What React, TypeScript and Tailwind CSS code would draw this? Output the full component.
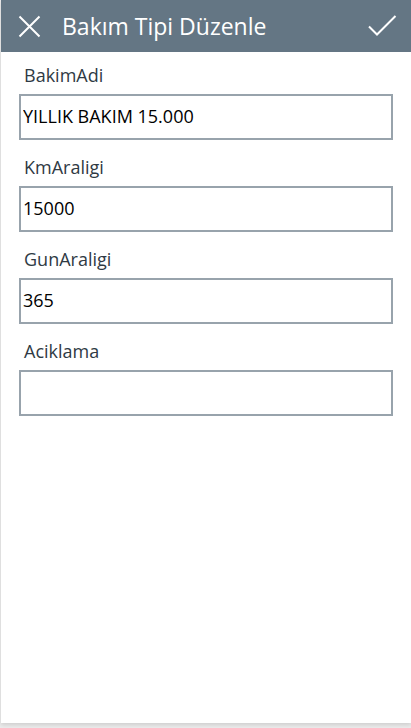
import React from "react";

const fields = [
  { label: "BakimAdi", value: "YILLIK BAKIM 15.000" },
  { label: "KmAraligi", value: "15000" },
  { label: "GunAraligi", value: "365" },
  { label: "Aciklama", value: "" },
];

export default function App() {
  return (
    <div className="w-[411px] h-[728px] bg-[#ebebeb] pl-[1px] font-['Open_Sans',sans-serif]">
      <div className="w-[410px] h-[723px] bg-white shadow-[0_2px_4px_rgba(0,0,0,0.12)] flex flex-col">
        {/* Header */}
        <div className="h-[52px] bg-[#647684] flex items-center text-white">
          <button className="ml-[17px] w-[23px] h-[23px] flex items-center justify-center">
            <svg width="23" height="23" viewBox="0 0 23 23" fill="none" stroke="white" strokeWidth="2">
              <path d="M1.5 1.5 L21.5 21.5 M21.5 1.5 L1.5 21.5" />
            </svg>
          </button>
          <h1 className="ml-[21px] text-[23px] leading-none">Bakım Tipi Düzenle</h1>
          <button className="ml-auto mr-[14px] w-[29px] h-[22px]">
            <svg width="29" height="22" viewBox="0 0 29 22" fill="none" stroke="white" strokeWidth="2">
              <path d="M1 11.5 L9 19.5 L27.5 1" />
            </svg>
          </button>
        </div>

        {/* Form */}
        <div className="pt-[11px] flex flex-col">
          {fields.map((f) => (
            <div key={f.label} className="flex flex-col mb-[15px]">
              <label className="pl-[23px] h-[24px] leading-[24px] text-[18px] text-[#2f3a44]">{f.label}</label>
              <input
                defaultValue={f.value}
                className="mt-[7px] ml-[18px] w-[374px] h-[46px] border-2 border-[#98a3ac] px-[2px] pb-[2px] text-[18px] text-black outline-none bg-white"
              />
            </div>
          ))}
        </div>
      </div>
    </div>
  );
}
